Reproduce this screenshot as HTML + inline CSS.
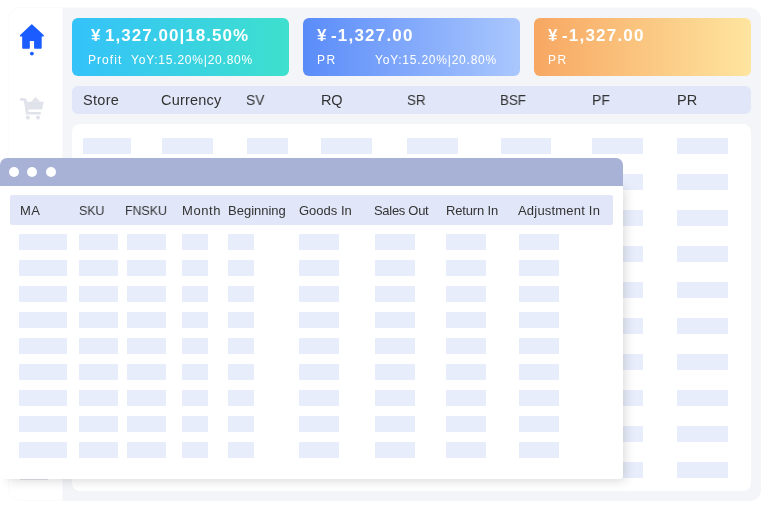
<!DOCTYPE html>
<html><head><meta charset="utf-8">
<style>
*{margin:0;padding:0;box-sizing:border-box}
html,body{width:769px;height:509px;overflow:hidden;background:#fff;font-family:"Liberation Sans",sans-serif}
.abs{position:absolute}
#outer{left:8px;top:7px;width:753px;height:494px;border:1px solid #fafbfc;border-radius:12px;background:#fff}
#panel{left:62px;top:8px;width:699px;height:493px;background:linear-gradient(90deg,#f9fafc 0,#f9fafc 1px,#f4f5f9 1px);border-radius:0 11px 11px 0}
.card{top:18px;width:217px;height:58px;border-radius:6px;color:#fff}
#c1{left:72px;background:linear-gradient(90deg,#34c2fa,#3ee0cd)}
#c2{left:303px;background:linear-gradient(90deg,#5a8cf9,#aac7fd)}
#c3{left:534px;background:linear-gradient(90deg,#f7a762,#fee59f)}
.big{position:absolute;will-change:transform;top:6.3px;font-size:17px;font-weight:bold;letter-spacing:1.6px;white-space:nowrap;line-height:24px}
.sub{position:absolute;will-change:transform;top:31.8px;font-size:12px;letter-spacing:1.6px;white-space:nowrap;line-height:20px}
#hdr{left:72px;top:86px;width:679px;height:28px;background:#e1e6f8;border-radius:6px}
.ht{position:absolute;will-change:transform;top:91px;font-size:14.5px;color:#333;line-height:18px;white-space:nowrap}
#tbl{left:72px;top:124px;width:679px;height:367px;background:#fff;border-radius:8px}
.bar{position:absolute;height:16px;background:#e7edfa}
#pop{left:0;top:158px;width:623px;height:321px;background:#fff;border-radius:7px 7px 4px 4px;overflow:hidden}
#ptitle{left:0;top:0;width:623px;height:28px;background:#a8b1d6}
.dot{position:absolute;top:9.2px;width:10px;height:10px;border-radius:50%;background:#fff}
#phdr{left:10px;top:37px;width:603px;height:30px;background:#e1e6f8;border-radius:2px}
.pt{position:absolute;will-change:transform;top:45px;font-size:13px;color:#333;line-height:16px;white-space:nowrap}
</style></head><body>
<div id="outer" class="abs"></div>
<div id="panel" class="abs"></div>

<!-- sidebar icons -->
<svg class="abs" style="left:0;top:0" width="62" height="140" viewBox="0 0 62 140">
  <path d="M31.8 25.0 L20.7 35.4 L20.7 35.9 L22.9 35.9 L22.9 48.0 L29.1 48.0 L29.1 40.3 L34.8 40.3 L34.8 48.0 L41.0 48.0 L41.0 35.9 L43.1 35.9 L43.1 35.4 Z" fill="#1a5cff" stroke="#1a5cff" stroke-width="1.4" stroke-linejoin="round"/>
  <circle cx="31.9" cy="53.6" r="1.9" fill="#1a5cff"/>
  <g fill="#e1e3ea">
    <rect x="20" y="98" width="5.5" height="2.8" rx="1.2"/>
    <path d="M23.6 99 L26.6 99 L28.6 112 L25.6 112 Z"/>
    <path d="M24.5 101.7 L43.7 101.7 L42 109.6 L26.2 109.6 Z"/>
    <path d="M35.6 97 L40.2 101.7 L31.2 101.7 Z"/>
    <rect x="25.6" y="112" width="15.4" height="2.4" rx="1"/>
    <circle cx="27.8" cy="117.6" r="2.1"/>
    <circle cx="38" cy="117.6" r="2.1"/>
  </g>
</svg>

<div id="c1" class="abs card">
  <div class="big" style="left:19px">¥</div><div class="big" style="left:33.4px;letter-spacing:1.03px">1,327.00|18.50%</div>
  <div class="sub" style="left:16px;letter-spacing:1.05px">Profit</div>
  <div class="sub" style="left:59px;letter-spacing:0.78px">YoY:15.20%|20.80%</div>
</div>
<div id="c2" class="abs card">
  <div class="big" style="left:14px">¥</div><div class="big" style="left:28.2px;letter-spacing:1.2px">-1,327.00</div>
  <div class="sub" style="left:13.5px">PR</div>
  <div class="sub" style="left:71.5px;letter-spacing:0.78px">YoY:15.20%|20.80%</div>
</div>
<div id="c3" class="abs card">
  <div class="big" style="left:14px">¥</div><div class="big" style="left:28.2px;letter-spacing:1.2px">-1,327.00</div>
  <div class="sub" style="left:13.5px">PR</div>
</div>

<div id="hdr" class="abs"></div>
<div class="ht" style="left:83px;letter-spacing:0.3px">Store</div>
<div class="ht" style="left:161px;letter-spacing:0.2px">Currency</div>
<div class="ht" style="left:246px;transform:scaleX(0.95);transform-origin:0 0">SV</div>
<div class="ht" style="left:321px;letter-spacing:-0.3px">RQ</div>
<div class="ht" style="left:407px;transform:scaleX(0.92);transform-origin:0 0">SR</div>
<div class="ht" style="left:500px;transform:scaleX(0.92);transform-origin:0 0">BSF</div>
<div class="ht" style="left:592px;transform:scaleX(0.96);transform-origin:0 0">PF</div>
<div class="ht" style="left:677px">PR</div>

<div id="tbl" class="abs"></div>
<div class="bar" style="left:83px;top:138px;width:48px"></div>
<div class="bar" style="left:162px;top:138px;width:51px"></div>
<div class="bar" style="left:247px;top:138px;width:41px"></div>
<div class="bar" style="left:321px;top:138px;width:51px"></div>
<div class="bar" style="left:407px;top:138px;width:51px"></div>
<div class="bar" style="left:501px;top:138px;width:50px"></div>
<div class="bar" style="left:592px;top:138px;width:51px"></div>
<div class="bar" style="left:677px;top:138px;width:51px"></div>
<div class="bar" style="left:83px;top:174px;width:48px"></div>
<div class="bar" style="left:162px;top:174px;width:51px"></div>
<div class="bar" style="left:247px;top:174px;width:41px"></div>
<div class="bar" style="left:321px;top:174px;width:51px"></div>
<div class="bar" style="left:407px;top:174px;width:51px"></div>
<div class="bar" style="left:501px;top:174px;width:50px"></div>
<div class="bar" style="left:592px;top:174px;width:51px"></div>
<div class="bar" style="left:677px;top:174px;width:51px"></div>
<div class="bar" style="left:83px;top:210px;width:48px"></div>
<div class="bar" style="left:162px;top:210px;width:51px"></div>
<div class="bar" style="left:247px;top:210px;width:41px"></div>
<div class="bar" style="left:321px;top:210px;width:51px"></div>
<div class="bar" style="left:407px;top:210px;width:51px"></div>
<div class="bar" style="left:501px;top:210px;width:50px"></div>
<div class="bar" style="left:592px;top:210px;width:51px"></div>
<div class="bar" style="left:677px;top:210px;width:51px"></div>
<div class="bar" style="left:83px;top:246px;width:48px"></div>
<div class="bar" style="left:162px;top:246px;width:51px"></div>
<div class="bar" style="left:247px;top:246px;width:41px"></div>
<div class="bar" style="left:321px;top:246px;width:51px"></div>
<div class="bar" style="left:407px;top:246px;width:51px"></div>
<div class="bar" style="left:501px;top:246px;width:50px"></div>
<div class="bar" style="left:592px;top:246px;width:51px"></div>
<div class="bar" style="left:677px;top:246px;width:51px"></div>
<div class="bar" style="left:83px;top:282px;width:48px"></div>
<div class="bar" style="left:162px;top:282px;width:51px"></div>
<div class="bar" style="left:247px;top:282px;width:41px"></div>
<div class="bar" style="left:321px;top:282px;width:51px"></div>
<div class="bar" style="left:407px;top:282px;width:51px"></div>
<div class="bar" style="left:501px;top:282px;width:50px"></div>
<div class="bar" style="left:592px;top:282px;width:51px"></div>
<div class="bar" style="left:677px;top:282px;width:51px"></div>
<div class="bar" style="left:83px;top:318px;width:48px"></div>
<div class="bar" style="left:162px;top:318px;width:51px"></div>
<div class="bar" style="left:247px;top:318px;width:41px"></div>
<div class="bar" style="left:321px;top:318px;width:51px"></div>
<div class="bar" style="left:407px;top:318px;width:51px"></div>
<div class="bar" style="left:501px;top:318px;width:50px"></div>
<div class="bar" style="left:592px;top:318px;width:51px"></div>
<div class="bar" style="left:677px;top:318px;width:51px"></div>
<div class="bar" style="left:83px;top:354px;width:48px"></div>
<div class="bar" style="left:162px;top:354px;width:51px"></div>
<div class="bar" style="left:247px;top:354px;width:41px"></div>
<div class="bar" style="left:321px;top:354px;width:51px"></div>
<div class="bar" style="left:407px;top:354px;width:51px"></div>
<div class="bar" style="left:501px;top:354px;width:50px"></div>
<div class="bar" style="left:592px;top:354px;width:51px"></div>
<div class="bar" style="left:677px;top:354px;width:51px"></div>
<div class="bar" style="left:83px;top:390px;width:48px"></div>
<div class="bar" style="left:162px;top:390px;width:51px"></div>
<div class="bar" style="left:247px;top:390px;width:41px"></div>
<div class="bar" style="left:321px;top:390px;width:51px"></div>
<div class="bar" style="left:407px;top:390px;width:51px"></div>
<div class="bar" style="left:501px;top:390px;width:50px"></div>
<div class="bar" style="left:592px;top:390px;width:51px"></div>
<div class="bar" style="left:677px;top:390px;width:51px"></div>
<div class="bar" style="left:83px;top:426px;width:48px"></div>
<div class="bar" style="left:162px;top:426px;width:51px"></div>
<div class="bar" style="left:247px;top:426px;width:41px"></div>
<div class="bar" style="left:321px;top:426px;width:51px"></div>
<div class="bar" style="left:407px;top:426px;width:51px"></div>
<div class="bar" style="left:501px;top:426px;width:50px"></div>
<div class="bar" style="left:592px;top:426px;width:51px"></div>
<div class="bar" style="left:677px;top:426px;width:51px"></div>
<div class="bar" style="left:83px;top:462px;width:48px"></div>
<div class="bar" style="left:162px;top:462px;width:51px"></div>
<div class="bar" style="left:247px;top:462px;width:41px"></div>
<div class="bar" style="left:321px;top:462px;width:51px"></div>
<div class="bar" style="left:407px;top:462px;width:51px"></div>
<div class="bar" style="left:501px;top:462px;width:50px"></div>
<div class="bar" style="left:592px;top:462px;width:51px"></div>
<div class="bar" style="left:677px;top:462px;width:51px"></div>


<div class="abs" style="left:20px;top:479px;width:28px;height:1px;background:#e2e4ea"></div>
<div class="abs" style="left:0;top:180px;width:623px;height:299px;border-radius:4px;background:#fff;box-shadow:5px 5px 11px -3px rgba(0,0,0,0.15)"></div>
<div id="pop" class="abs">
  <div id="ptitle" class="abs">
    <div class="dot" style="left:9px"></div>
    <div class="dot" style="left:27px"></div>
    <div class="dot" style="left:46px"></div>
  </div>
  <div id="phdr" class="abs"></div>
  <div class="pt" style="left:20px;letter-spacing:0.3px">MA</div>
  <div class="pt" style="left:79px;transform:scaleX(0.95);transform-origin:0 0">SKU</div>
  <div class="pt" style="left:125px;transform:scaleX(0.95);transform-origin:0 0">FNSKU</div>
  <div class="pt" style="left:182px;letter-spacing:0.6px">Month</div>
  <div class="pt" style="left:228px">Beginning</div>
  <div class="pt" style="left:299px">Goods In</div>
  <div class="pt" style="left:374px;letter-spacing:-0.3px">Sales Out</div>
  <div class="pt" style="left:446px;letter-spacing:-0.15px">Return In</div>
  <div class="pt" style="left:518px;letter-spacing:0.2px">Adjustment In</div>
  <div class="bar" style="left:19px;top:76px;width:48px"></div>
<div class="bar" style="left:79px;top:76px;width:39px"></div>
<div class="bar" style="left:127px;top:76px;width:39px"></div>
<div class="bar" style="left:182px;top:76px;width:26px"></div>
<div class="bar" style="left:228px;top:76px;width:26px"></div>
<div class="bar" style="left:299px;top:76px;width:40px"></div>
<div class="bar" style="left:375px;top:76px;width:40px"></div>
<div class="bar" style="left:446px;top:76px;width:40px"></div>
<div class="bar" style="left:519px;top:76px;width:40px"></div>
<div class="bar" style="left:19px;top:102px;width:48px"></div>
<div class="bar" style="left:79px;top:102px;width:39px"></div>
<div class="bar" style="left:127px;top:102px;width:39px"></div>
<div class="bar" style="left:182px;top:102px;width:26px"></div>
<div class="bar" style="left:228px;top:102px;width:26px"></div>
<div class="bar" style="left:299px;top:102px;width:40px"></div>
<div class="bar" style="left:375px;top:102px;width:40px"></div>
<div class="bar" style="left:446px;top:102px;width:40px"></div>
<div class="bar" style="left:519px;top:102px;width:40px"></div>
<div class="bar" style="left:19px;top:128px;width:48px"></div>
<div class="bar" style="left:79px;top:128px;width:39px"></div>
<div class="bar" style="left:127px;top:128px;width:39px"></div>
<div class="bar" style="left:182px;top:128px;width:26px"></div>
<div class="bar" style="left:228px;top:128px;width:26px"></div>
<div class="bar" style="left:299px;top:128px;width:40px"></div>
<div class="bar" style="left:375px;top:128px;width:40px"></div>
<div class="bar" style="left:446px;top:128px;width:40px"></div>
<div class="bar" style="left:519px;top:128px;width:40px"></div>
<div class="bar" style="left:19px;top:154px;width:48px"></div>
<div class="bar" style="left:79px;top:154px;width:39px"></div>
<div class="bar" style="left:127px;top:154px;width:39px"></div>
<div class="bar" style="left:182px;top:154px;width:26px"></div>
<div class="bar" style="left:228px;top:154px;width:26px"></div>
<div class="bar" style="left:299px;top:154px;width:40px"></div>
<div class="bar" style="left:375px;top:154px;width:40px"></div>
<div class="bar" style="left:446px;top:154px;width:40px"></div>
<div class="bar" style="left:519px;top:154px;width:40px"></div>
<div class="bar" style="left:19px;top:180px;width:48px"></div>
<div class="bar" style="left:79px;top:180px;width:39px"></div>
<div class="bar" style="left:127px;top:180px;width:39px"></div>
<div class="bar" style="left:182px;top:180px;width:26px"></div>
<div class="bar" style="left:228px;top:180px;width:26px"></div>
<div class="bar" style="left:299px;top:180px;width:40px"></div>
<div class="bar" style="left:375px;top:180px;width:40px"></div>
<div class="bar" style="left:446px;top:180px;width:40px"></div>
<div class="bar" style="left:519px;top:180px;width:40px"></div>
<div class="bar" style="left:19px;top:206px;width:48px"></div>
<div class="bar" style="left:79px;top:206px;width:39px"></div>
<div class="bar" style="left:127px;top:206px;width:39px"></div>
<div class="bar" style="left:182px;top:206px;width:26px"></div>
<div class="bar" style="left:228px;top:206px;width:26px"></div>
<div class="bar" style="left:299px;top:206px;width:40px"></div>
<div class="bar" style="left:375px;top:206px;width:40px"></div>
<div class="bar" style="left:446px;top:206px;width:40px"></div>
<div class="bar" style="left:519px;top:206px;width:40px"></div>
<div class="bar" style="left:19px;top:232px;width:48px"></div>
<div class="bar" style="left:79px;top:232px;width:39px"></div>
<div class="bar" style="left:127px;top:232px;width:39px"></div>
<div class="bar" style="left:182px;top:232px;width:26px"></div>
<div class="bar" style="left:228px;top:232px;width:26px"></div>
<div class="bar" style="left:299px;top:232px;width:40px"></div>
<div class="bar" style="left:375px;top:232px;width:40px"></div>
<div class="bar" style="left:446px;top:232px;width:40px"></div>
<div class="bar" style="left:519px;top:232px;width:40px"></div>
<div class="bar" style="left:19px;top:258px;width:48px"></div>
<div class="bar" style="left:79px;top:258px;width:39px"></div>
<div class="bar" style="left:127px;top:258px;width:39px"></div>
<div class="bar" style="left:182px;top:258px;width:26px"></div>
<div class="bar" style="left:228px;top:258px;width:26px"></div>
<div class="bar" style="left:299px;top:258px;width:40px"></div>
<div class="bar" style="left:375px;top:258px;width:40px"></div>
<div class="bar" style="left:446px;top:258px;width:40px"></div>
<div class="bar" style="left:519px;top:258px;width:40px"></div>
<div class="bar" style="left:19px;top:284px;width:48px"></div>
<div class="bar" style="left:79px;top:284px;width:39px"></div>
<div class="bar" style="left:127px;top:284px;width:39px"></div>
<div class="bar" style="left:182px;top:284px;width:26px"></div>
<div class="bar" style="left:228px;top:284px;width:26px"></div>
<div class="bar" style="left:299px;top:284px;width:40px"></div>
<div class="bar" style="left:375px;top:284px;width:40px"></div>
<div class="bar" style="left:446px;top:284px;width:40px"></div>
<div class="bar" style="left:519px;top:284px;width:40px"></div>

</div>

</body></html>
